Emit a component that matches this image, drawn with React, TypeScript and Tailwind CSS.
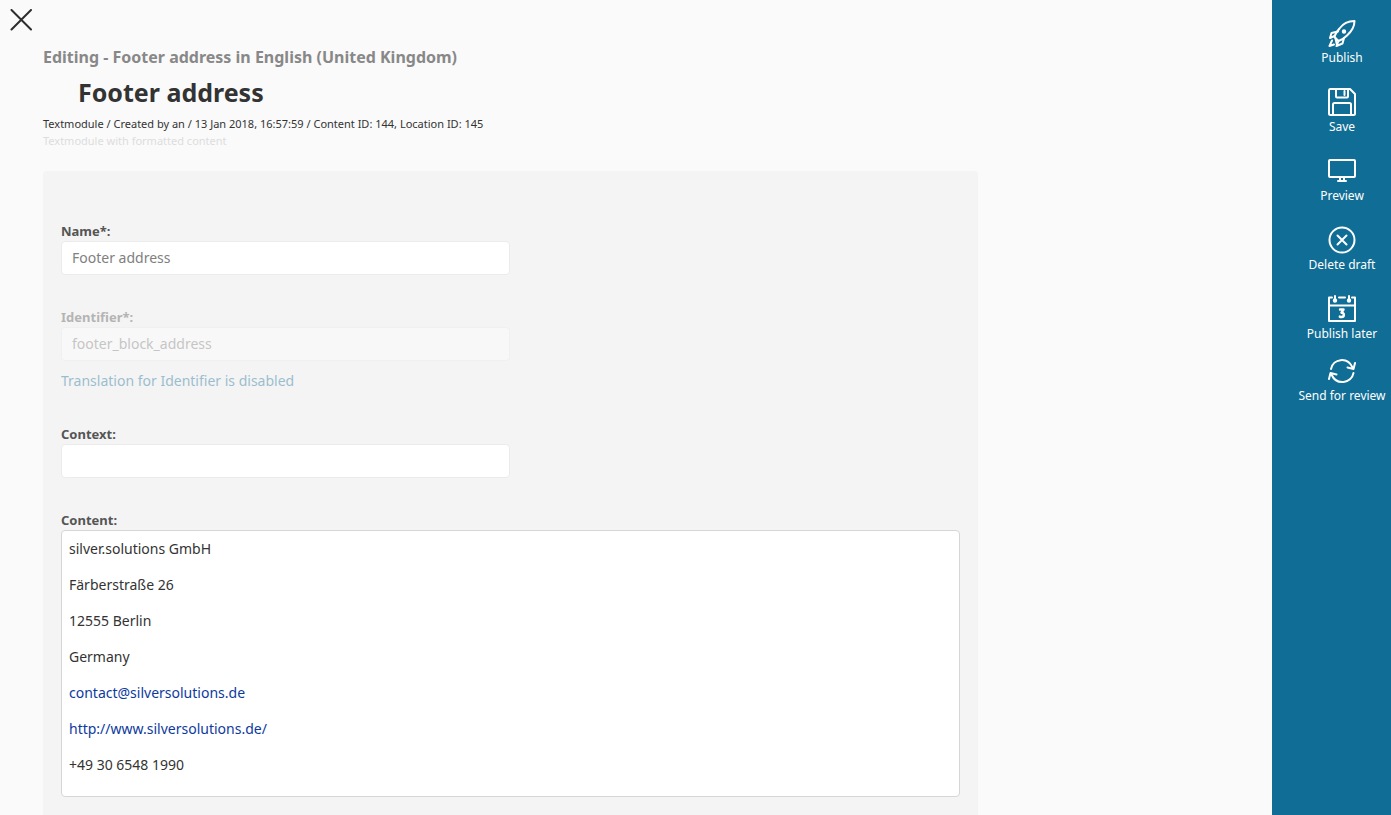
import { useState } from 'react';
import type { ReactNode } from 'react';
import clsx from 'clsx';

interface Action {
  label: string;
  icon: ReactNode;
}

interface IconProps {
  children: ReactNode;
}

function Icon({ children }: IconProps) {
  return (
    <svg
      viewBox="0 0 28 28"
      className="w-7 h-7"
      fill="none"
      stroke="currentColor"
      strokeWidth="2"
      strokeLinecap="round"
      strokeLinejoin="round"
      aria-hidden="true"
    >
      {children}
    </svg>
  );
}

const actions: Action[] = [
  {
    label: 'Publish',
    icon: (
      <Icon>
        <path d="M26.5 2C20 2 15 4.5 11.5 9.5C9 12.5 7 15.5 6.5 18L10.5 22C14 21 16.5 19 19 16.5C24 12 26.5 8.5 26.5 2Z" />
        <path d="M10 12.5L3.5 14L2 19L6.5 17" />
        <path d="M16 19L14.5 24.5L8.5 27L10.5 22" />
        <path d="M4 21.5L1.5 27L6 25.5" />
        <path d="M7.5 19.5L9 26" />
        <circle cx="16" cy="12.5" r="1.2" fill="currentColor" />
      </Icon>
    ),
  },
  {
    label: 'Save',
    icon: (
      <Icon>
        <path d="M2 1H22L27 6V25.5Q27 27 25.5 27H2.5Q1 27 1 25.5V2.5Q1 1 2 1Z" />
        <path d="M8 1V8.5Q8 9.5 9 9.5H19Q20 9.5 20 8.5V1" />
        <path d="M16.5 3V7" />
        <path d="M5 27V16.5Q5 15 6.5 15H21.5Q23 15 23 16.5V27" />
      </Icon>
    ),
  },
  {
    label: 'Preview',
    icon: (
      <Icon>
        <rect x="1" y="3" width="26" height="17" rx="1" />
        <path d="M12 20V24M16 20V24M10 24H18" />
      </Icon>
    ),
  },
  {
    label: 'Delete draft',
    icon: (
      <Icon>
        <circle cx="14" cy="14" r="12.5" />
        <path d="M9.5 9.5L18.5 18.5M18.5 9.5L9.5 18.5" />
      </Icon>
    ),
  },
  {
    label: 'Publish later',
    icon: (
      <Icon>
        <path d="M4 2.5H1V26H27V2.5H24M11 2.5H17M1 10.5H27" />
        <path d="M7 1V6M21 1V6" />
        <circle cx="7" cy="5.5" r="1.2" />
        <circle cx="21" cy="5.5" r="1.2" />
        <path
          d="M12 14.5H15.5L13.5 17.7C16.8 17.7 16.5 22 13.5 22C12.8 22 12.3 21.9 11.8 21.6"
          strokeWidth="2.4"
        />
      </Icon>
    ),
  },
];

const reviewAction: Action = {
  label: 'Send for review',
  icon: (
    <Icon>
      <path d="M3 12C5 1.5 19.5 -.5 24.5 10.5" />
      <path d="M19.5 10.5L25.5 12L27 6" />
      <path d="M25.5 16C23.5 26.5 8.5 29 3.5 17.5" />
      <path d="M8.5 17.5L2.5 16L1 22" />
    </Icon>
  ),
};

function ActionButton({ label, icon }: Action) {
  return (
    <button type="button" className="flex flex-col items-center gap-0.5 text-white cursor-pointer">
      {icon}
      <span className="text-[12px] leading-[18px] whitespace-nowrap">{label}</span>
    </button>
  );
}

interface FieldProps {
  id: string;
  label: string;
  value: string;
  onChange?: (value: string) => void;
  disabled?: boolean;
  hint?: string;
}

function Field({ id, label, value, onChange, disabled, hint }: FieldProps) {
  return (
    <div className={clsx('flex flex-col', disabled && 'opacity-40')}>
      <label htmlFor={id} className="text-[13px] leading-5 font-bold text-[#555]">
        {label}
      </label>
      <input
        id={id}
        type="text"
        value={value}
        disabled={disabled}
        onChange={(e) => onChange?.(e.target.value)}
        className="w-full max-w-[449px] h-[34px] px-[10px] pb-0.5 text-[14px] text-[#808080] bg-white border border-[#ebebeb] rounded"
      />
      {hint && <p className="mt-[9px] text-[14px] leading-[22px] text-[#106d95]">{hint}</p>}
    </div>
  );
}

const addressLines = [
  { text: 'silver.solutions GmbH' },
  { text: 'Färberstraße 26' },
  { text: '12555 Berlin' },
  { text: 'Germany' },
  { text: 'contact@silversolutions.de', href: 'mailto:contact@silversolutions.de' },
  { text: 'http://www.silversolutions.de/', href: 'http://www.silversolutions.de/' },
  { text: '+49 30 6548 1990' },
];

export default function App() {
  const [name, setName] = useState('Footer address');
  const [context, setContext] = useState('');

  return (
    <div className="flex min-h-screen bg-[#fafafa] font-['Noto_Sans',sans-serif] text-[#333]">
      <main className="flex flex-col flex-1 min-w-0">
        <div className="flex pl-[10px] pt-[9px] pb-[14px]">
          <button type="button" aria-label="Close" className="w-[22px] h-[22px] cursor-pointer">
            <svg viewBox="0 0 22 22" fill="none" stroke="#2d2d2d" strokeWidth="2" strokeLinecap="round">
              <path d="M1.5 1L21 20.5M21 1L1.5 20.5" />
            </svg>
          </button>
        </div>

        {/* Content info */}
        <header className="pl-[43px]">
          <p className="text-[16px] leading-6 font-bold text-[#888]">
            Editing - Footer address in English (United Kingdom)
          </p>
          <h1 className="my-[5px] pl-[35px] text-[25px] leading-9 font-bold">Footer address</h1>
          <p className="text-[11px] leading-[18px]">
            Textmodule / Created by an / 13 Jan 2018, 16:57:59 / Content ID: 144, Location ID: 145
          </p>
          <p className="text-[11px] leading-4 text-[#ddd]">Textmodule with formatted content</p>
        </header>

        {/* Form */}
        <form className="flex flex-col flex-1 w-full max-w-[978px] pl-[43px] mt-[22px]">
          <div className="flex flex-col flex-1 gap-8 px-[18px] pt-[50px] pb-[18px] bg-[#f4f4f4] rounded-t">
            <Field id="name" label="Name*:" value={name} onChange={setName} />
            <Field
              id="identifier"
              label="Identifier*:"
              value="footer_block_address"
              disabled
              hint="Translation for Identifier is disabled"
            />
            <Field id="context" label="Context:" value={context} onChange={setContext} />

            <div className="flex flex-col">
              <span id="content-label" className="text-[13px] leading-5 font-bold text-[#555]">
                Content:
              </span>
              <div
                role="textbox"
                aria-multiline="true"
                aria-labelledby="content-label"
                contentEditable
                suppressContentEditableWarning
                className="flex flex-col gap-4 px-[7px] pt-2 pb-[21px] text-[14px] leading-5 bg-white border border-[#d6d6d6] rounded"
              >
                {addressLines.map((line) => (
                  <p key={line.text}>
                    {line.href ? (
                      <a href={line.href} className="text-[#0d3aa0]">
                        {line.text}
                      </a>
                    ) : (
                      line.text
                    )}
                  </p>
                ))}
              </div>
            </div>
          </div>
        </form>
      </main>

      {/* Action bar */}
      <aside className="flex flex-col items-center gap-3.5 w-[119px] shrink-0 pl-[21px] pt-[19px] bg-[#106d95]">
        <div className="flex flex-col items-center gap-[21px]">
          {actions.map((action) => (
            <ActionButton key={action.label} {...action} />
          ))}
        </div>
        <ActionButton {...reviewAction} />
      </aside>
    </div>
  );
}
